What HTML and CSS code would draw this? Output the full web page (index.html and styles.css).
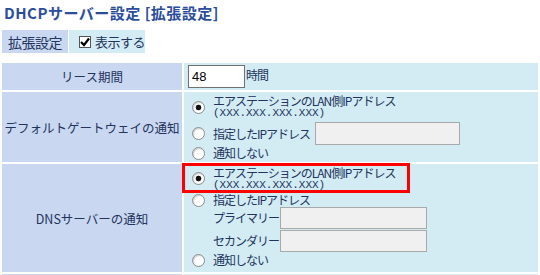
FILE: index.html
```html
<!DOCTYPE html>
<html lang="ja">
<head>
    <meta charset="UTF-8">
    <meta name="viewport" content="width=device-width, initial-scale=1.0">
    <title>DHCPサーバー設定</title>
    <link rel="stylesheet" href="styles.css">
</head>
<body>
    <h2 class="page-title">DHCPサーバー設定 [拡張設定]</h2>

    <div class="tabs">
        <span class="tab tab-name">拡張設定</span>
        <label class="tab tab-toggle">
            <span class="checkbox">
                <svg width="10" height="10" viewBox="0 0 10 10"><path d="M1 5 L4 8 L9 1.5" fill="none" stroke="#000" stroke-width="2.2"/></svg>
            </span>表示する
        </label>
    </div>

    <table class="settings">
        <tr class="row-lease">
            <th>リース期間</th>
            <td class="lease"><input type="text" class="hours" value="48">時間</td>
        </tr>
        <tr class="row-gateway">
            <th>デフォルトゲートウェイの通知</th>
            <td>
                <div class="option">
                    <input type="radio" name="gateway" checked>
                    <span class="text">エアステーションのLAN側IPアドレス<span class="mono">(XXX.XXX.XXX.XXX)</span></span>
                </div>
                <div class="option with-input">
                    <input type="radio" name="gateway">
                    <span class="text">指定したIPアドレス</span>
                    <input type="text" class="address">
                </div>
                <div class="option">
                    <input type="radio" name="gateway">
                    <span class="text">通知しない</span>
                </div>
            </td>
        </tr>
        <tr class="row-dns">
            <th>DNSサーバーの通知</th>
            <td>
                <div class="option highlight">
                    <input type="radio" name="dns" checked>
                    <span class="text">エアステーションのLAN側IPアドレス<span class="mono">(XXX.XXX.XXX.XXX)</span></span>
                </div>
                <div class="option">
                    <input type="radio" name="dns">
                    <span class="text">指定したIPアドレス</span>
                </div>
                <div class="sub">
                    <span class="text sub-label">プライマリー</span>
                    <input type="text" class="server">
                </div>
                <div class="sub">
                    <span class="text sub-label">セカンダリー</span>
                    <input type="text" class="server">
                </div>
                <div class="option">
                    <input type="radio" name="dns">
                    <span class="text">通知しない</span>
                </div>
            </td>
        </tr>
        <!-- next row continues below the fold -->
        <tr class="row-next">
            <th></th>
            <td></td>
        </tr>
    </table>
</body>
</html>
```

FILE: styles.css
```css
body {
    margin: 0;
    font-family: "Noto Sans CJK JP", "DejaVu Sans", sans-serif;
    color: #22335d;
    background: #fff;
}
.page-title {
    margin: 0;
    padding: 4px 4px 0;
    height: 26px;
    box-sizing: border-box;
    font-size: 15px;
    line-height: 18px;
    letter-spacing: 0.5px;
    color: #2b4e9c;
}
.tabs {
    display: flex;
    gap: 1px;
    margin: 4px 0 0 2px;
    height: 23px;
}
.tab {
    display: flex;
    align-items: center;
    font-size: 14px;
    white-space: nowrap;
}
.tab-name {
    width: 66px;
    justify-content: center;
    background: #c9d8f0;
    letter-spacing: -0.5px;
}
.tab-toggle {
    width: 76px;
    padding-left: 10px;
    box-sizing: border-box;
    background: #d3ecf4;
    font-size: 13px;
    letter-spacing: -0.5px;
}
.checkbox {
    display: flex;
    align-items: center;
    justify-content: center;
    width: 10px;
    height: 10px;
    margin-right: 4px;
    border: 1px solid #555;
    background: #fff;
}
.settings {
    width: 540px;
    margin-top: 8px;
    border-spacing: 2px;
    table-layout: fixed;
}
.settings th {
    width: 180px;
    padding: 0;
    background: #c9d8f0;
    font-weight: normal;
    font-size: 12.5px;
    white-space: nowrap;
}
.settings td {
    padding: 3px 8px 2px;
    background: #d3ecf4;
    font-size: 12px;
    vertical-align: top;
}
.row-lease th, .row-lease td {
    height: 27px;
    box-sizing: border-box;
}
.row-gateway td {
    height: 70px;
    box-sizing: border-box;
}
.row-dns td {
    height: 108px;
    box-sizing: border-box;
    padding-top: 2px;
}
.row-next td {
    height: 30px;
}
.settings td.lease {
    padding: 2px 4px 1px;
    letter-spacing: -1px;
}
.hours {
    width: 57px;
    height: 23px;
    box-sizing: border-box;
    padding: 1px 3px;
    border: 1px solid #707070;
    font-family: "Liberation Sans", sans-serif;
    font-size: 13px;
    color: #000;
    vertical-align: middle;
    margin: 0 1px 0 0;
}
.option {
    display: flex;
    align-items: center;
    height: 14px;
    margin-bottom: 3px;
}
.option:has(.mono) {
    height: 24px;
}
.option.with-input {
    height: 23px;
    margin-bottom: 1px;
}
.option:last-child {
    margin-bottom: 0;
}
.option input[type="radio"] {
    appearance: none;
    flex: none;
    width: 13px;
    height: 13px;
    margin: 0 8px 0 0;
    border: 1px solid #8c8c8c;
    border-radius: 50%;
    background: #fff;
    box-shadow: inset 1px 1px 1px #cfcfcf;
}
.option input[type="radio"]:checked {
    background: radial-gradient(circle, #111 0 2.5px, #fff 3.2px);
}
.text {
    display: block;
    line-height: 12px;
    letter-spacing: -1px;
    white-space: nowrap;
}
.mono {
    display: block;
    margin-top: 1px;
    font-family: "Liberation Mono", monospace;
    font-size: 11px;
    line-height: 11px;
    letter-spacing: 0;
}
.address {
    width: 145px;
    height: 23px;
    box-sizing: border-box;
    margin: 0 0 0 5px;
    border: 1px solid #a9a9a9;
    background: #f0f0f0;
}
.highlight {
    width: 222px;
    height: 25px;
    margin-left: -7px;
    padding: 1px 0 0 7px;
    box-sizing: border-box;
    outline: 3px solid #f00;
}
.row-dns .option:nth-child(2) {
    margin-bottom: 0;
}
.sub {
    display: flex;
    align-items: center;
    padding-left: 21px;
    margin-bottom: 1px;
}
.sub-label {
    width: 67px;
}
.server {
    width: 147px;
    height: 22px;
    box-sizing: border-box;
    margin: 0;
    border: 1px solid #a9a9a9;
    background: #f0f0f0;
}
.row-dns .sub + .option {
    margin-top: 1px;
}
```
